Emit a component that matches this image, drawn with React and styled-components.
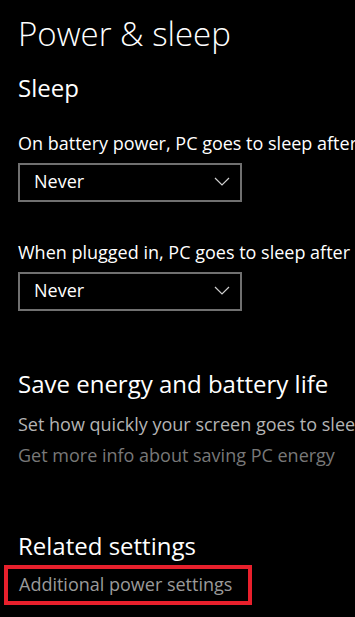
import React from 'react';
import styled, { createGlobalStyle } from 'styled-components';

const GlobalStyle = createGlobalStyle`
  html, body {
    margin: 0;
    padding: 0;
    background: #000;
  }
  body {
    font-family: "Open Sans", "Noto Sans", sans-serif;
    color: #fff;
    overflow: hidden;
  }
`;

const Page = styled.div`
  width: 355px;
  height: 617px;
  padding-left: 18px;
  box-sizing: border-box;
  display: flex;
  flex-direction: column;
  align-items: flex-start;
  background: #000;
  overflow: hidden;
`;

const PageTitle = styled.h1`
  margin: 14px 0 0;
  font-size: 33px;
  line-height: 40px;
  font-weight: 300;
  white-space: nowrap;
`;

const SectionTitle = styled.h2`
  margin: ${p => p.$gap}px 0 0;
  font-size: 24px;
  line-height: 32px;
  font-weight: 400;
  white-space: nowrap;
`;

const Text = styled.div`
  margin: ${p => p.$gap}px 0 0;
  font-size: 18px;
  line-height: 24px;
  color: ${p => p.$color || '#fff'};
  white-space: nowrap;
`;

const Select = styled.div`
  margin-top: 8px;
  width: 224px;
  height: 39px;
  box-sizing: border-box;
  border: 2px solid #707070;
  display: flex;
  align-items: center;
  justify-content: space-between;
  padding: 0 10px 3px 14px;
  font-size: 18px;
`;

const Chevron = () => (
  <svg width="16" height="9" viewBox="0 0 16 9">
    <path d="M1 1 L8 8 L15 1" fill="none" stroke="#cfcfcf" strokeWidth="1.2" />
  </svg>
);

const Highlight = styled.div`
  margin: 3px 0 0 -14px;
  border: 4px solid #e8202c;
  width: 248px;
  height: 40px;
  box-sizing: border-box;
  padding: 3px 0 0 11px;
`;

const LinkText = styled.span`
  font-size: 18px;
  line-height: 24px;
  color: #9a9a9a;
  white-space: nowrap;
`;

export default function App() {
  return (
    <Page>
      <GlobalStyle />
      <PageTitle>Power &amp; sleep</PageTitle>
      <SectionTitle $gap={18}>Sleep</SectionTitle>
      <Text $gap={27}>On battery power, PC goes to sleep after</Text>
      <Select>
        <span>Never</span>
        <Chevron />
      </Select>
      <Text $gap={38}>When plugged in, PC goes to sleep after</Text>
      <Select>
        <span>Never</span>
        <Chevron />
      </Select>
      <SectionTitle $gap={57}>Save energy and battery life</SectionTitle>
      <Text $gap={12} $color="#b4b4b4">Set how quickly your screen goes to sleep</Text>
      <Text $gap={7} $color="#787878">Get more info about saving PC energy</Text>
      <SectionTitle $gap={63}>Related settings</SectionTitle>
      <Highlight>
        <LinkText>Additional power settings</LinkText>
      </Highlight>
    </Page>
  );
}
